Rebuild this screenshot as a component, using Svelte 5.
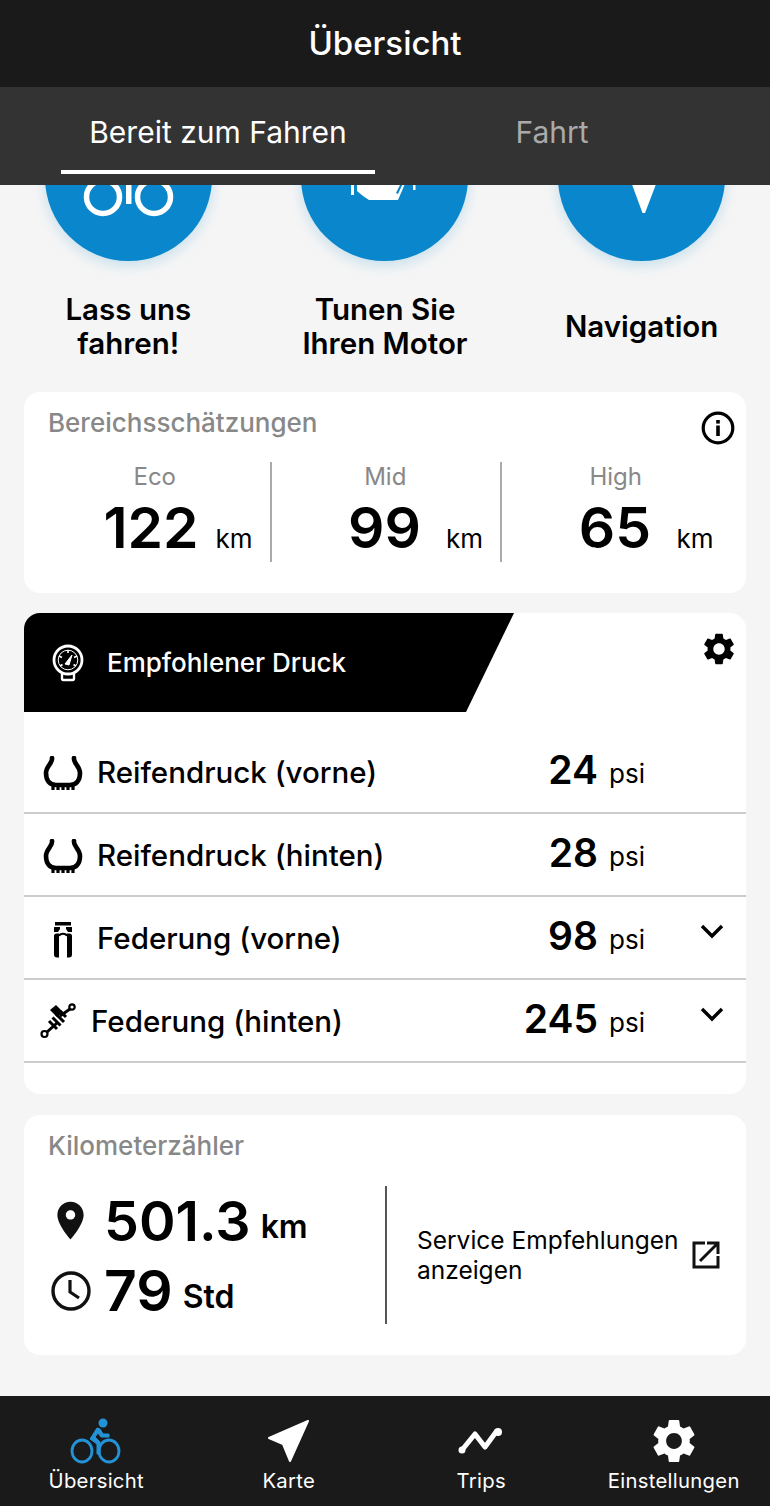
<script>
  const gear = "M19.14 12.94c.04-.3.06-.61.06-.94 0-.32-.02-.64-.07-.94l2.03-1.58c.18-.14.23-.41.12-.61l-1.92-3.32c-.12-.22-.37-.29-.59-.22l-2.39.96c-.5-.38-1.03-.7-1.62-.94l-.36-2.54c-.04-.24-.24-.41-.48-.41h-3.84c-.24 0-.43.17-.47.41l-.36 2.54c-.59.24-1.13.57-1.62.94l-2.39-.96c-.22-.08-.47 0-.59.22L2.74 8.87c-.12.21-.08.47.12.61l2.03 1.58c-.05.3-.09.63-.09.94s.02.64.07.94l-2.03 1.58c-.18.14-.23.41-.12.61l1.92 3.32c.12.22.37.29.59.22l2.39-.96c.5.38 1.03.7 1.62.94l.36 2.54c.05.24.24.41.48.41h3.84c.24 0 .44-.17.47-.41l.36-2.54c.59-.24 1.13-.56 1.62-.94l2.39.96c.22.08.47 0 .59-.22l1.92-3.32c.12-.22.07-.47-.12-.61l-2.01-1.58zM12 15.6c-1.98 0-3.6-1.62-3.6-3.6s1.62-3.6 3.6-3.6 3.6 1.62 3.6 3.6-1.62 3.6-3.6 3.6z";
  const ranges = [
    { label: "Eco", value: "122", wide: true },
    { label: "Mid", value: "99" },
    { label: "High", value: "65" }
  ];
  const rows = [
    { label: "Reifendruck (vorne)", value: "24", icon: "tire" },
    { label: "Reifendruck (hinten)", value: "28", icon: "tire" },
    { label: "Federung (vorne)", value: "98", icon: "fork", more: true },
    { label: "Federung (hinten)", value: "245", icon: "shock", more: true }
  ];
</script>

<div class="app">
  <header class="title">Übersicht</header>
  <nav class="tabs">
    <div class="tab active">Bereit zum Fahren</div>
    <div class="tab">Fahrt</div>
  </nav>

  <main class="content">
    <section class="actions">
      <div class="action">
        <div class="circle">
          <svg viewBox="0 0 167 167" width="167" height="167">
            <g fill="none" stroke="#fff" stroke-width="5.5">
              <circle cx="58" cy="103" r="16.5" />
              <circle cx="109" cy="103" r="16.5" />
            </g>
            <rect x="81" y="88" width="5.5" height="22" fill="#fff" />
          </svg>
        </div>
        <div class="action-label">Lass uns<br />fahren!</div>
      </div>
      <div class="action">
        <div class="circle">
          <svg viewBox="0 0 167 167" width="167" height="167" fill="#fff">
            <rect x="50" y="85" width="3" height="16" />
            <path d="M56 85h50l-3 7-6 14H68l-6-4-6-5z" />
            <rect x="112" y="85" width="2.500" height="11" />
            <path d="M104 85l-7 15-2-1 7-14z" fill="#0986cc" />
          </svg>
        </div>
        <div class="action-label">Tunen Sie<br />Ihren Motor</div>
      </div>
      <div class="action">
        <div class="circle">
          <svg viewBox="0 0 167 167" width="167" height="167">
            <path d="M72 85h28l-13 34h-2.500z" fill="#fff" />
          </svg>
        </div>
        <div class="action-label">Navigation</div>
      </div>
    </section>

    <section class="card range">
      <div class="card-head">
        <h2>Bereichsschätzungen</h2>
        <svg class="info" viewBox="0 0 34 34" width="34" height="34">
          <circle cx="17" cy="17" r="14.800" fill="none" stroke="#000" stroke-width="3.200" />
          <rect x="15.200" y="14.500" width="3.600" height="10.500" fill="#000" />
          <rect x="15.200" y="9" width="3.600" height="3.600" fill="#000" />
        </svg>
      </div>
      <div class="range-cols">
        {#each ranges as r}
          <div class="range-col">
            <div class="range-label">{r.label}</div>
            <div class="range-value">
              <span class="range-num" class:wide={r.wide}>{r.value}</span>
              <span class="range-unit">km</span>
            </div>
          </div>
        {/each}
      </div>
    </section>

    <section class="card pressure">
      <div class="pressure-head">
        <div class="banner">
          <svg viewBox="0 0 32 38" width="32" height="38" fill="none" stroke="#fff">
            <circle cx="16" cy="16" r="14" stroke-width="2.800" />
            <circle cx="16" cy="16" r="9.800" stroke-width="1" />
            <path d="M10 30v4.500a1.500 1.500 0 0 0 1.500 1.500h9a1.500 1.500 0 0 0 1.500-1.500V30" stroke-width="2.400" />
            <path d="M13 20l7-9-3 10z" fill="#fff" stroke-width="1" />
            <path d="M16 6v3M7 12l3 1.500M25 12l-3 1.500M8 22l2.500-1.500M24 22l-2.500-1.500" stroke-width="1.600" />
          </svg>
          <span>Empfohlener Druck</span>
        </div>
        <svg class="gear" viewBox="0 0 24 24" width="38" height="38"><path d={gear} fill="#000" /></svg>
      </div>
      <div class="rows">
        {#each rows as row}
          <div class="row">
            <div class="row-icon" class:narrow={row.icon === "shock"}>
              {#if row.icon === "tire"}
                <svg viewBox="0 0 40 36" width="40" height="36">
                  <path d="M9 2c1 5-6 8-6 15 0 8 4 12 10 12h14c6 0 10-4 10-12 0-7-7-10-6-15" fill="none" stroke="#000" stroke-width="4.600" stroke-linecap="round" />
                  <path d="M10 29v5M15 29v5M20 29v5M25 29v5M30 29v5" stroke="#000" stroke-width="3.200" />
                </svg>
              {:else if row.icon === "fork"}
                <svg viewBox="0 0 40 36" width="40" height="36">
                  <rect x="12" y="0" width="16" height="3.500" fill="#000" />
                  <path d="M11 5h6v2l-2 3h-4zM29 5h-6v2l2 3h4z" fill="#000" />
                  <path d="M14 35.500c-2 0-3-1-3-3V14c0-1.500 1-2.500 2.500-2.500h2.500v24zM26 35.500c2 0 3-1 3-3V14c0-1.500-1-2.500-2.500-2.500H24v24z" fill="#000" />
                  <path d="M16 14c1-3 7-3 8 0" fill="none" stroke="#000" stroke-width="2" />
                </svg>
              {:else}
                <svg viewBox="0 0 36 36" width="36" height="36">
                  <circle cx="4.500" cy="31" r="3" fill="none" stroke="#000" stroke-width="2.200" />
                  <circle cx="32" cy="4" r="2.700" fill="none" stroke="#000" stroke-width="2.200" />
                  <path d="M7 29l10-9M20 13l10-7" stroke="#000" stroke-width="3" />
                  <path d="M9 18l8 8M12.500 14.500l8 8M16 11l8 8M20 8l6 6" stroke="#000" stroke-width="3" />
                  <path d="M10 7l6-5 7 7-6 5z" fill="#000" />
                </svg>
              {/if}
            </div>
            <div class="row-label">{row.label}</div>
            <div class="row-value">{row.value}</div>
            <div class="row-unit">psi</div>
            <div class="row-more">
              {#if row.more}
                <svg viewBox="0 0 26 18" width="26" height="18">
                  <path d="M3 3l10 10L23 3" fill="none" stroke="#000" stroke-width="3.400" />
                </svg>
              {/if}
            </div>
          </div>
        {/each}
      </div>
    </section>

    <section class="card odo">
      <h2>Kilometerzähler</h2>
      <div class="odo-body">
        <div class="odo-left">
          <div class="odo-line">
            <svg viewBox="0 0 24 24" width="45" height="45"><path d="M12 2C8.130 2 5 5.130 5 9c0 5.250 7 13 7 13s7-7.750 7-13c0-3.870-3.130-7-7-7zm0 9.500c-1.380 0-2.500-1.120-2.500-2.500s1.120-2.500 2.500-2.500 2.500 1.120 2.500 2.500-1.120 2.500-2.500 2.500z" fill="#111" /></svg>
            <span class="odo-num">501.3</span>
            <span class="odo-unit">km</span>
          </div>
          <div class="odo-line second">
            <svg viewBox="0 0 40 40" width="40" height="40" fill="none" stroke="#111">
              <circle cx="20" cy="20" r="18" stroke-width="3.400" />
              <path d="M19 9v12l9 6" stroke-width="3.200" />
            </svg>
            <span class="odo-num">79</span>
            <span class="odo-unit">Std</span>
          </div>
        </div>
        <div class="odo-right">
          <div class="service">Service Empfehlungen anzeigen</div>
          <svg viewBox="0 0 30 30" width="30" height="30" fill="none" stroke="#111" stroke-width="3">
            <path d="M14 3H3v24h24V16" />
            <path d="M9 21L26 4M16 3h11v11" />
          </svg>
        </div>
      </div>
    </section>
  </main>

  <footer class="bottom">
    <div class="nav-item blue">
      <svg viewBox="0 0 52 46" width="52" height="46">
        <circle cx="33" cy="5" r="4.500" fill="#2293d6" />
        <path d="M27 10l-7 11 7 5v10h3V24l-5-5 3-4 3 4h8v-3h-6l-3-5z" fill="#2293d6" stroke="#2293d6" stroke-width="1" />
        <g fill="none" stroke="#2293d6" stroke-width="2.800">
          <ellipse cx="12" cy="33" rx="10" ry="11" />
          <ellipse cx="39" cy="33" rx="10" ry="11" />
        </g>
      </svg>
      <span>Übersicht</span>
    </div>
    <div class="nav-item">
      <svg viewBox="0 0 52 46" width="52" height="46">
        <path d="M45 3L6 20l14 6 7 17z" fill="#fff" stroke="#fff" stroke-width="2" stroke-linejoin="round" />
      </svg>
      <span>Karte</span>
    </div>
    <div class="nav-item">
      <svg viewBox="0 0 52 46" width="52" height="46">
        <path d="M7 32l13-16 10 13 11-15" fill="none" stroke="#fff" stroke-width="5" stroke-linecap="round" stroke-linejoin="round" />
        <circle cx="7" cy="32" r="3.500" fill="#fff" />
        <circle cx="43" cy="14" r="4" fill="#fff" />
      </svg>
      <span>Trips</span>
    </div>
    <div class="nav-item">
      <svg viewBox="1.500 1.500 21 21" width="46" height="46"><path d={gear} fill="#fff" /></svg>
      <span>Einstellungen</span>
    </div>
  </footer>
</div>

<style>
  :global(body) {
    margin: 0;
    background: #f5f5f5;
  }
  .app {
    width: 770px;
    height: 1506px;
    display: flex;
    flex-direction: column;
    overflow: hidden;
    font-family: Inter, "Liberation Sans", sans-serif;
    color: #000;
    background: #f5f5f5;
  }
  .title {
    height: 87px;
    flex: none;
    display: flex;
    align-items: center;
    justify-content: center;
    background: #1a1a1a;
    color: #fff;
    font-size: 33px;
    font-weight: 500;
    box-sizing: border-box;
    padding-bottom: 2px;
  }
  .tabs {
    height: 98px;
    flex: none;
    display: flex;
    gap: 20px;
    padding-left: 61px;
    background: #333;
    box-sizing: border-box;
    position: relative;
    z-index: 2;
  }
  .tab {
    width: 314px;
    height: 87px;
    display: flex;
    align-items: center;
    justify-content: center;
    color: #aaa;
    font-size: 30px;
    box-sizing: border-box;
    padding-top: 6px;
    border-bottom: 4px solid transparent;
  }
  .tab.active {
    color: #fff;
    border-bottom-color: #fff;
  }
  .content {
    flex: 1;
    min-height: 0;
    overflow: hidden;
    display: flex;
    flex-direction: column;
    align-items: center;
  }
  .actions {
    width: 770px;
    flex: none;
    display: grid;
    grid-template-columns: repeat(3, 1fr);
    margin-top: -91px;
  }
  .action {
    display: flex;
    flex-direction: column;
    align-items: center;
  }
  .circle {
    width: 167px;
    height: 167px;
    border-radius: 50%;
    background: #0986cc;
    box-shadow: 0 4px 14px rgba(7, 135, 206, 0.2);
    overflow: hidden;
  }
  .circle svg {
    display: block;
  }
  .action-label {
    height: 70px;
    margin-top: 30px;
    display: flex;
    align-items: center;
    text-align: center;
    font-size: 29.5px;
    line-height: 34px;
    font-weight: 600;
  }
  .card {
    width: 722px;
    flex: none;
    background: #fff;
    border-radius: 16px;
    box-sizing: border-box;
  }
  h2 {
    margin: 0;
    font-size: 26px;
    font-weight: 500;
    color: #888;
  }
  .range {
    height: 201px;
    margin-top: 31px;
    padding: 15px 0 0 24px;
  }
  .card-head {
    display: flex;
    justify-content: space-between;
    align-items: flex-start;
    height: 55px;
    padding-right: 11px;
  }
  .info {
    margin-top: 4px;
  }
  .range-cols {
    display: grid;
    grid-template-columns: repeat(3, 230.5px);
    margin-left: -7px;
  }
  .range-col {
    height: 100px;
    border-right: 2px solid #aaa;
    box-sizing: border-box;
    padding-right: 1px;
  }
  .range-col:last-child {
    border-right-color: transparent;
  }
  .range-label {
    text-align: center;
    color: #888;
    font-size: 24px;
    line-height: 30px;
  }
  .range-value {
    display: flex;
    align-items: baseline;
    padding: 0 16px 0 53px;
    margin-top: 4px;
  }
  .range-num {
    width: 120px;
    text-align: center;
    font-size: 57px;
    line-height: 64px;
    font-weight: 600;
  }
  .range-num.wide {
    padding-right: 6px;
    box-sizing: border-box;
  }
  .range-unit {
    margin-left: auto;
    font-size: 26px;
  }
  .pressure {
    height: 481px;
    margin-top: 20px;
    overflow: hidden;
  }
  .pressure-head {
    height: 118px;
    display: flex;
    justify-content: space-between;
    align-items: flex-start;
    padding-right: 8px;
  }
  .banner {
    width: 490px;
    height: 99px;
    box-sizing: border-box;
    padding-left: 28px;
    background: #000;
    color: #fff;
    display: flex;
    align-items: center;
    gap: 23px;
    font-size: 26px;
    font-weight: 500;
    clip-path: polygon(0 0, 100% 0, 442px 100%, 0 100%);
  }
  .gear {
    margin-top: 17px;
  }
  .row {
    height: 83px;
    box-sizing: border-box;
    border-bottom: 2px solid #ccc;
    display: flex;
    align-items: center;
    padding-left: 19px;
  }
  .row-icon {
    width: 54px;
    flex: none;
    display: flex;
    padding-top: 5px;
  }
  .row-icon.narrow {
    width: 51px;
    padding-top: 0;
    margin-left: -3px;
  }
  .row-icon svg {
    display: block;
  }
  .row-label {
    flex: 1;
    font-size: 29.5px;
    font-weight: 500;
    padding-top: 1px;
  }
  .row-value {
    font-size: 39px;
    font-weight: 600;
    margin-bottom: 4px;
  }
  .row-unit {
    width: 36px;
    margin-left: 11px;
    font-size: 26px;
    padding-top: 4px;
  }
  .row-more {
    width: 101px;
    height: 18px;
    flex: none;
    display: flex;
    justify-content: flex-end;
    padding-right: 21px;
    box-sizing: border-box;
    margin-bottom: 12px;
  }
  .odo {
    height: 240px;
    margin-top: 21px;
    padding: 15px 0 0 24px;
  }
  .odo-body {
    display: flex;
    margin-top: 25px;
  }
  .odo-left {
    width: 339px;
    height: 138px;
    border-right: 2px solid #555;
    flex: none;
    box-sizing: border-box;
  }
  .odo-line {
    display: flex;
    align-items: center;
    height: 68px;
    color: #000;
    box-sizing: border-box;
  }
  .odo-line svg {
    flex: none;
  }
  .odo-line .odo-num {
    margin-left: 11px;
    font-size: 55.5px;
    font-weight: 600;
  }
  .odo-line .odo-unit {
    margin-left: 10px;
    font-size: 32px;
    font-weight: 600;
    padding-top: 12px;
  }
  .second {
    padding-top: 5px;
  }
  .second svg {
    margin-left: 3px;
  }
  .odo-line.second .odo-num {
    margin-left: 13px;
    font-size: 57px;
  }
  .odo-right {
    flex: 1;
    display: flex;
    align-items: center;
    padding-left: 30px;
    gap: 8px;
  }
  .service {
    width: 266px;
    flex: none;
    font-size: 24.5px;
    line-height: 30px;
  }
  .bottom {
    height: 110px;
    flex: none;
    display: grid;
    grid-template-columns: repeat(4, 192.5px);
    background: #1a1a1a;
    position: relative;
    z-index: 2;
  }
  .nav-item {
    display: flex;
    flex-direction: column;
    align-items: center;
    padding-top: 22px;
    color: #fff;
    font-size: 20.3px;
    line-height: 24px;
    letter-spacing: 0.3px;
  }
  .nav-item span {
    margin-top: 5px;
    color: #fff;
  }
  .nav-item svg {
    display: block;
  }
</style>
